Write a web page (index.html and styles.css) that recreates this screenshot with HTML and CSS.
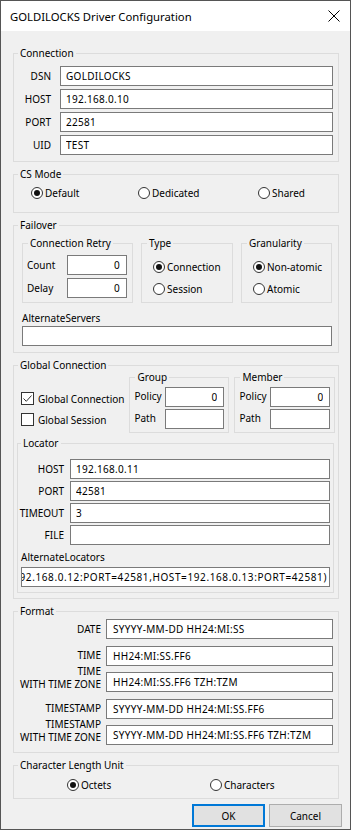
FILE: index.html
```html
<!DOCTYPE html>
<html lang="en">
<head>
    <meta charset="UTF-8">
    <meta name="viewport" content="width=device-width, initial-scale=1.0">
    <title>GOLDILOCKS Driver Configuration</title>
    <link rel="stylesheet" href="styles.css">
</head>
<body>
    <div class="window">
        <div class="titlebar">
            <span class="title">GOLDILOCKS Driver Configuration</span>
            <svg class="close" width="12" height="12" viewBox="0 0 12 12">
                <path d="M0.5 0.5 L11.5 11.5 M11.5 0.5 L0.5 11.5" stroke="#000" stroke-width="1" fill="none"/>
            </svg>
        </div>
        <div class="content">
            <fieldset class="group">
                <legend>Connection</legend>
                <div class="rows conn">
                    <label>DSN</label><input class="field" type="text" value="GOLDILOCKS">
                    <label>HOST</label><input class="field" type="text" value="192.168.0.10">
                    <label>PORT</label><input class="field" type="text" value="22581">
                    <label>UID</label><input class="field" type="text" value="TEST">
                </div>
            </fieldset>

            <fieldset class="group">
                <legend>CS Mode</legend>
                <div class="cs">
                    <span class="opt"><span class="radio on"></span>Default</span>
                    <span class="opt"><span class="radio"></span>Dedicated</span>
                    <span class="opt"><span class="radio"></span>Shared</span>
                </div>
            </fieldset>

            <fieldset class="group">
                <legend>Failover</legend>
                <div class="failover">
                    <div class="sub-row">
                        <fieldset class="group sub">
                            <legend>Connection Retry</legend>
                            <div class="rows retry">
                                <label>Count</label><input class="field num" type="text" value="0">
                                <label>Delay</label><input class="field num" type="text" value="0">
                            </div>
                        </fieldset>
                        <fieldset class="group sub">
                            <legend>Type</legend>
                            <div class="stack">
                                <span class="opt"><span class="radio on"></span>Connection</span>
                                <span class="opt"><span class="radio"></span>Session</span>
                            </div>
                        </fieldset>
                        <fieldset class="group sub">
                            <legend>Granularity</legend>
                            <div class="stack">
                                <span class="opt"><span class="radio on"></span>Non-atomic</span>
                                <span class="opt"><span class="radio"></span>Atomic</span>
                            </div>
                        </fieldset>
                    </div>
                    <div class="caption">AlternateServers</div>
                    <input class="field servers" type="text" value="">
                </div>
            </fieldset>

            <fieldset class="group">
                <legend>Global Connection</legend>
                <div class="global">
                    <div class="global-row">
                        <div class="checks">
                            <span class="opt">
                                <span class="box"><svg width="11" height="11" viewBox="0 0 11 11"><path d="M1.5 5.5 L4.3 8.3 L9.5 2.5" stroke="#333" stroke-width="1" fill="none"/></svg></span>Global Connection
                            </span>
                            <span class="opt"><span class="box"></span>Global Session</span>
                        </div>
                        <fieldset class="group sub">
                            <legend>Group</legend>
                            <div class="rows policy">
                                <label>Policy</label><input class="field num" type="text" value="0">
                                <label>Path</label><input class="field" type="text" value="">
                            </div>
                        </fieldset>
                        <fieldset class="group sub">
                            <legend>Member</legend>
                            <div class="rows policy member">
                                <label>Policy</label><input class="field num" type="text" value="0">
                                <label>Path</label><input class="field" type="text" value="">
                            </div>
                        </fieldset>
                    </div>
                    <fieldset class="group sub locator">
                        <legend>Locator</legend>
                        <div class="rows loc">
                            <label>HOST</label><input class="field" type="text" value="192.168.0.11">
                            <label>PORT</label><input class="field" type="text" value="42581">
                            <label>TIMEOUT</label><input class="field" type="text" value="3">
                            <label>FILE</label><input class="field" type="text" value="">
                        </div>
                        <div class="caption loc-caption">AlternateLocators</div>
                        <div class="field scroll"><span>(HOST=192.168.0.11:PORT=42581,HOST=192.168.0.12:PORT=42581,HOST=192.168.0.13:PORT=42581)</span></div>
                    </fieldset>
                </div>
            </fieldset>

            <fieldset class="group">
                <legend>Format</legend>
                <div class="format">
                    <label>DATE</label><input class="field" type="text" value="SYYYY-MM-DD HH24:MI:SS">
                    <label>TIME</label><input class="field" type="text" value="HH24:MI:SS.FF6">
                    <label class="two">TIME<br>WITH TIME ZONE</label><input class="field" type="text" value="HH24:MI:SS.FF6 TZH:TZM">
                    <label>TIMESTAMP</label><input class="field" type="text" value="SYYYY-MM-DD HH24:MI:SS.FF6">
                    <label class="two">TIMESTAMP<br>WITH TIME ZONE</label><input class="field" type="text" value="SYYYY-MM-DD HH24:MI:SS.FF6 TZH:TZM">
                </div>
            </fieldset>

            <fieldset class="group">
                <legend>Character Length Unit</legend>
                <div class="clu">
                    <span class="opt"><span class="radio on"></span>Octets</span>
                    <span class="opt"><span class="radio"></span>Characters</span>
                </div>
            </fieldset>

            <div class="buttons">
                <button type="button" class="btn default">OK</button>
                <button type="button" class="btn">Cancel</button>
            </div>
        </div>
    </div>
</body>
</html>
```

FILE: styles.css
```css
body {
    margin: 0;
    font-family: "Noto Sans", "Open Sans", sans-serif;
    font-size: 10px;
    color: #000;
    background: #f0f0f0;
}
.window {
    width: 351px;
    height: 830px;
    box-sizing: border-box;
    border: 1px solid #555;
    background: #f0f0f0;
}
.titlebar {
    height: 30px;
    background: #fff;
    display: flex;
    align-items: center;
    justify-content: space-between;
    padding: 0 10px 0 9px;
}
.title {
    font-size: 11.3px;
}
.content {
    display: flex;
    flex-direction: column;
    gap: 5px;
    padding: 15px 11px 0 12px;
}

/* group boxes */
.group {
    margin: 0;
    padding: 0;
    min-width: 0;
    border: 1px solid #dcdcdc;
}
.group legend {
    padding: 0 2px;
    margin-left: 4px;
    line-height: 14px;
}
.sub legend {
    margin-left: 5px;
}
.locator legend {
    margin-left: 3px;
}

/* text fields */
.field {
    box-sizing: border-box;
    width: 100%;
    min-width: 0;
    height: 20px;
    margin: 0;
    padding: 0 5px;
    border: 1px solid #7a7a7a;
    background: #fff;
    font: inherit;
    letter-spacing: 0.3px;
    color: #000;
    outline: none;
}
.num {
    text-align: right;
    padding-right: 6px;
}
.rows {
    display: grid;
    align-items: center;
}
.rows label, .format label {
    line-height: 13px;
}
.conn {
    grid-template-columns: 37px 1fr;
    gap: 3px 9px;
    padding: 6px 5px 6px 0;
}
.conn label, .loc label, .format label {
    text-align: right;
}

/* radios and checks */
.opt {
    display: flex;
    align-items: center;
    gap: 2px;
    white-space: nowrap;
}
.radio {
    box-sizing: border-box;
    width: 12px;
    height: 12px;
    border: 1px solid #333;
    border-radius: 50%;
    background: #fff;
    display: flex;
    align-items: center;
    justify-content: center;
    flex: none;
}
.radio.on::after {
    content: "";
    width: 6px;
    height: 6px;
    border-radius: 50%;
    background: #111;
}
.box {
    box-sizing: border-box;
    width: 13px;
    height: 13px;
    border: 1px solid #333;
    background: #fff;
    margin-right: 2px;
    flex: none;
    display: flex;
}
.cs {
    display: grid;
    grid-template-columns: 107px 120px auto;
    grid-auto-rows: 16px;
    padding: 4px 0 11px 17px;
}

/* failover */
.failover {
    padding: 4px 6px 6px 8px;
}
.sub-row {
    display: grid;
    grid-template-columns: 111px 92px 1fr;
    gap: 8px;
}
.retry {
    grid-template-columns: 1fr 60px;
    row-gap: 3px;
    padding: 5px 5px 4px 4px;
}
.stack {
    display: grid;
    grid-auto-rows: 22px;
    padding: 6px 0 2px 11px;
}
.caption {
    margin-top: 8px;
    line-height: 14px;
}
.servers {
    margin-top: 1px;
}

/* global connection */
.global {
    padding: 0 4px 5px 3px;
}
.global-row {
    display: grid;
    grid-template-columns: 1fr 100px 101px;
    column-gap: 5px;
    margin-top: -2px;
}
.checks {
    display: grid;
    grid-auto-rows: 21px;
    align-content: start;
    padding: 18px 0 0 4px;
}
.policy {
    grid-template-columns: 1fr 59px;
    grid-auto-rows: 19px;
    row-gap: 3px;
    padding: 3px 4px 4px 4px;
}
.member {
    grid-template-columns: 1fr 60px;
}
.locator {
    margin-top: 3px;
}
.loc {
    grid-template-columns: 46px 1fr;
    gap: 2px 6px;
    padding: 9px 3px 0 0;
}
.loc-caption {
    margin: 5px 0 0 3px;
}
.scroll {
    width: auto;
    margin: 3px 3px 5px 3px;
    padding: 0 2px 0 0;
    display: flex;
    align-items: center;
    justify-content: flex-end;
    overflow: hidden;
    white-space: nowrap;
    letter-spacing: 0.6px;
}
.scroll span {
    flex: none;
}

/* format */
.format {
    display: grid;
    grid-template-columns: 87px 1fr;
    grid-auto-rows: 20px;
    gap: 6.5px 5px;
    align-items: center;
    padding: 1px 5px 7px 0;
}
.format .field {
    padding-left: 6px;
}
.format .two {
    align-self: end;
    margin-bottom: 1px;
}

/* character length unit */
.clu {
    display: grid;
    grid-template-columns: 143px auto;
    grid-auto-rows: 16px;
    padding: 5px 0 5px 53px;
}

/* buttons */
.buttons {
    display: flex;
    justify-content: flex-end;
    gap: 4px;
    margin: 0 -3px 0 0;
}
.btn {
    width: 73px;
    height: 23px;
    margin: 0;
    padding: 0;
    font: inherit;
    color: #000;
    background: #e1e1e1;
    border: 1px solid #adadad;
}
.btn.default {
    border-color: #0078d7;
    box-shadow: inset 0 0 0 1px #0078d7;
}
```
